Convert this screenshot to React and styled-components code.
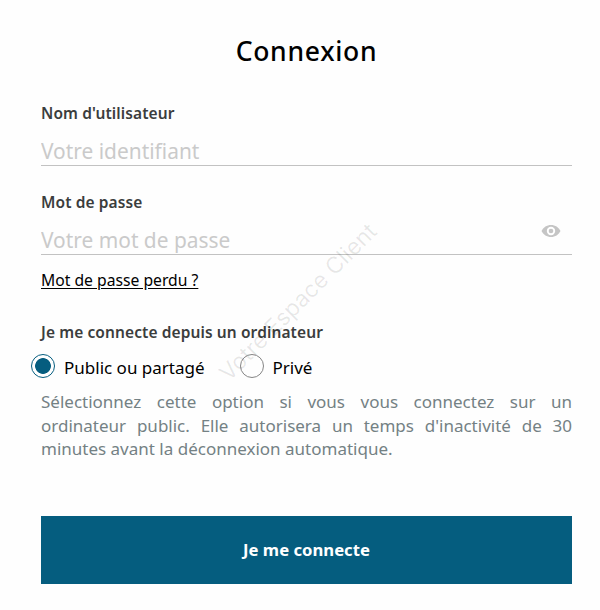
import React, { useState } from "react";
import styled, { createGlobalStyle } from "styled-components";

const COLOR = {
    primary: "#055d7f",
    label: "#3b3d3d",
    placeholder: "#cacaca",
    line: "#c2c2c2",
    hint: "#748184",
};

const GlobalStyle = createGlobalStyle`
    * {
        box-sizing: border-box;
    }

    body {
        margin: 0;
        background: #fefefe;
        font-family: "Noto Sans", "Open Sans", sans-serif;
        color: #000;
    }
`;

const Page = styled.main`
    position: relative;
    width: 600px;
    height: 610px;
    padding: 35px 28px 0 41px;
    overflow: hidden;
`;

const Title = styled.h1`
    margin: 0 0 36px;
    font-size: 26.5px;
    font-weight: 500;
    line-height: 32px;
    letter-spacing: 0.7px;
    text-align: center;
`;

const Form = styled.form`
    display: flex;
    flex-direction: column;
`;

const Field = styled.div`
    height: 89px;
`;

const Label = styled.label`
    display: block;
    font-size: 15.5px;
    font-weight: 600;
    line-height: 20px;
    letter-spacing: 0.1px;
    color: ${COLOR.label};
`;

const InputRow = styled.div`
    display: flex;
    align-items: center;
    height: 43px;
    border-bottom: 1px solid ${COLOR.line};
`;

const Input = styled.input`
    flex: 1;
    min-width: 0;
    height: 28px;
    margin-top: 14px;
    padding: 0;
    border: 0;
    outline: 0;
    background: none;
    font-family: inherit;
    font-size: 20.9px;

    &::placeholder {
        color: ${COLOR.placeholder};
        opacity: 1;
    }
`;

const EyeButton = styled.button`
    display: flex;
    margin: -4px 11px 0 0;
    padding: 0;
    border: 0;
    background: none;
`;

const LostLink = styled.a`
    align-self: flex-start;
    margin-top: -12px;
    font-size: 15.7px;
    line-height: 22px;
    color: #000;
    text-decoration: underline;
    text-underline-offset: 2px;
`;

const ComputerLabel = styled(Label)`
    margin-top: 31px;
`;

const RadioGroup = styled.div`
    display: flex;
    gap: 35px;
    margin: 11px 0 0 -10px;
`;

const RadioLabel = styled.label`
    display: flex;
    align-items: center;
    gap: 9px;
    font-size: 17px;
    line-height: 25px;
`;

const RadioText = styled.span`
    position: relative;
    top: 2px;
`;

const Radio = styled.input`
    appearance: none;
    width: 24px;
    height: 24px;
    margin: 0;
    border: 1px solid #858585;
    border-radius: 50%;
    background: transparent;

    &:checked {
        border-color: ${COLOR.primary};
        background: radial-gradient(circle, ${COLOR.primary} 7.5px, #fff 8.2px);
    }
`;

const Hint = styled.p`
    margin: 12px 0 0;
    font-size: 17px;
    line-height: 23.5px;
    text-align: justify;
    color: ${COLOR.hint};
`;

const Submit = styled.button`
    height: 67.5px;
    margin-top: 55.5px;
    padding: 0;
    border: 0;
    background: ${COLOR.primary};
    color: #fff;
    font-family: inherit;
    font-size: 16.7px;
    font-weight: 700;
`;

const Watermark = styled.span`
    position: absolute;
    top: 302px;
    left: 298px;
    font-family: Inter, sans-serif;
    font-size: 22.8px;
    line-height: 30px;
    white-space: nowrap;
    color: rgba(0, 0, 0, 0.09);
    transform: translate(-50%, -50%) rotate(-45deg);
    pointer-events: none;
`;

const EyeIcon = () => (
    <svg width="20" height="14" viewBox="0 0 20 14">
        <path
            d="M0.5 7C2.4 3.2 5.8 1 10 1s7.6 2.2 9.5 6c-1.9 3.8-5.3 6-9.5 6S2.4 10.8 0.5 7z"
            fill="#c5c5c5"
        />
        <circle cx="10" cy="7" r="4.2" fill="#fff" />
        <circle cx="10" cy="7" r="2.3" fill="#c5c5c5" />
    </svg>
);

const App = () => {
    const [computer, setComputer] = useState("public");

    return (
        <Page>
            <GlobalStyle />
            <Title>Connexion</Title>
            <Form onSubmit={(e) => e.preventDefault()}>
                <Field>
                    <Label htmlFor="username">Nom d'utilisateur</Label>
                    <InputRow>
                        <Input id="username" type="text" placeholder="Votre identifiant" />
                    </InputRow>
                </Field>
                <Field>
                    <Label htmlFor="password">Mot de passe</Label>
                    <InputRow>
                        <Input id="password" type="password" placeholder="Votre mot de passe" />
                        <EyeButton type="button">
                            <EyeIcon />
                        </EyeButton>
                    </InputRow>
                </Field>
                <LostLink href="#">Mot de passe perdu ?</LostLink>

                <ComputerLabel as="div">Je me connecte depuis un ordinateur</ComputerLabel>
                <RadioGroup>
                    <RadioLabel>
                        <Radio
                            type="radio"
                            name="computer"
                            checked={computer === "public"}
                            onChange={() => setComputer("public")}
                        />
                        <RadioText>Public ou partagé</RadioText>
                    </RadioLabel>
                    <RadioLabel>
                        <Radio
                            type="radio"
                            name="computer"
                            checked={computer === "private"}
                            onChange={() => setComputer("private")}
                        />
                        <RadioText>Privé</RadioText>
                    </RadioLabel>
                </RadioGroup>
                <Hint>
                    Sélectionnez cette option si vous vous connectez sur un ordinateur public. Elle
                    autorisera un temps d'inactivité de 30 minutes avant la déconnexion automatique.
                </Hint>

                <Submit type="submit">Je me connecte</Submit>
            </Form>
            <Watermark>Votre Espace Client</Watermark>
        </Page>
    );
};

export default App;
